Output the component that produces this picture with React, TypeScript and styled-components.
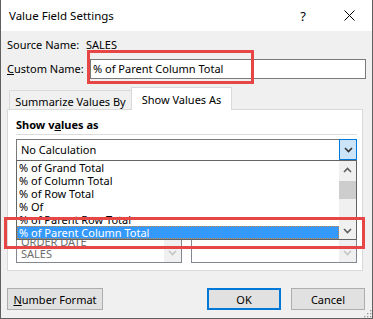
import styled, { createGlobalStyle } from "styled-components";

const GlobalStyle = createGlobalStyle`
  html, body {
    margin: 0;
    padding: 0;
    background: #fff;
  }
  body {
    font-family: "Noto Sans", "Segoe UI", sans-serif;
    font-size: 11px;
    color: #000;
    white-space: nowrap;
  }
`;

const Chevron = ({ dir, color }: { dir: "up" | "down"; color: string }) => (
  <svg width="9" height="6" viewBox="0 0 9 6">
    <path
      d={dir === "down" ? "M1 1 L4.5 4.5 L8 1" : "M1 5 L4.5 1.5 L8 5"}
      fill="none"
      stroke={color}
      strokeWidth="1.6"
    />
  </svg>
);

const App = () => {
  const options = [
    "% of Grand Total",
    "% of Column Total",
    "% of Row Total",
    "% Of",
    "% of Parent Row Total",
    "% of Parent Column Total",
  ];

  return (
    <>
      <GlobalStyle />
      <Window>
        <TitleBar>
          <Title>Value Field Settings</Title>
          <CaptionButton>?</CaptionButton>
          <CaptionButton>
            <svg width="11" height="11" viewBox="0 0 11 11">
              <path d="M0.5 0.5 L10.5 10.5 M10.5 0.5 L0.5 10.5" stroke="#000" strokeWidth="1" />
            </svg>
          </CaptionButton>
        </TitleBar>

        <Body>
          <FieldRow $labelWidth={79} $top={7}>
            <span>Source Name:</span>
            <span>SALES</span>
          </FieldRow>
          <FieldRow $labelWidth={83} $top={7}>
            <span>
              <u>C</u>ustom Name:
            </span>
            <TextInput>% of Parent Column Total</TextInput>
          </FieldRow>

          <TabStrip>
            <Tab>Summarize Values By</Tab>
            <Tab $active>Show Values As</Tab>
          </TabStrip>

          <TabPanel>
            <GroupHeading>
              Show v<u>a</u>lues as
            </GroupHeading>
            <Separator />
            <ComboWrap>
              <Combo>
                <ComboText>No Calculation</ComboText>
                <DropButton>
                  <Chevron dir="down" color="#333" />
                </DropButton>
              </Combo>
              <DropList>
                <ListRows>
                  {options.map((o, i) => (
                    <ListRow key={o} $selected={i === options.length - 1}>
                      {o}
                    </ListRow>
                  ))}
                </ListRows>
                <ScrollBar>
                  <ScrollArrow>
                    <Chevron dir="up" color="#606060" />
                  </ScrollArrow>
                  <Thumb />
                  <ScrollArrow $bottom>
                    <Chevron dir="down" color="#606060" />
                  </ScrollArrow>
                </ScrollBar>
              </DropList>
            </ComboWrap>

            {/* base field / base item lists, mostly covered by the open dropdown */}
            <BaseBoxes>
              <ListBox>
                <BoxItems>
                  <BoxItem>ORDER DATE</BoxItem>
                  <BoxItem>SALES</BoxItem>
                </BoxItems>
                <BoxScroll>
                  <Chevron dir="down" color="#c4c4c4" />
                </BoxScroll>
              </ListBox>
              <ListBox>
                <BoxItems />
                <BoxScroll>
                  <Chevron dir="down" color="#c4c4c4" />
                </BoxScroll>
              </ListBox>
            </BaseBoxes>
          </TabPanel>

          <ButtonRow>
            <DialogButton $width={96}>
              <u>N</u>umber Format
            </DialogButton>
            <Spacer />
            <DialogButton $width={74} $default>
              OK
            </DialogButton>
            <DialogButton $width={74}>Cancel</DialogButton>
          </ButtonRow>
        </Body>

        <Callout style={{ left: 86, top: 50, width: 167, height: 34 }} />
        <Callout style={{ left: 3, top: 217, width: 361, height: 32 }} />

        <SizeGrip width="9" height="9" viewBox="0 0 9 9">
          <g fill="#9a9a9a">
            <rect x="7" y="1" width="1.3" height="1.3" />
            <rect x="4" y="4" width="1.3" height="1.3" />
            <rect x="7" y="4" width="1.3" height="1.3" />
            <rect x="1" y="7" width="1.3" height="1.3" />
            <rect x="4" y="7" width="1.3" height="1.3" />
            <rect x="7" y="7" width="1.3" height="1.3" />
          </g>
        </SizeGrip>
      </Window>
    </>
  );
};

const Window = styled.div`
  position: relative;
  width: 373px;
  height: 319px;
  box-sizing: border-box;
  border: 1px solid #5f5f5f;
  border-top: none;
  background: #f0f0f0;
  display: flex;
  flex-direction: column;
  overflow: hidden;
`;

const TitleBar = styled.div`
  height: 31px;
  flex-shrink: 0;
  background: #fff;
  display: flex;
  align-items: center;
  padding-left: 8px;
`;

const Title = styled.div`
  flex: 1;
  font-size: 11.5px;
  margin-top: -1px;
`;

const CaptionButton = styled.div`
  width: 46px;
  height: 31px;
  display: flex;
  align-items: center;
  justify-content: center;
  font-size: 13px;
`;

const Body = styled.div`
  flex: 1;
  display: flex;
  flex-direction: column;
  padding: 0 6px;
`;

const FieldRow = styled.div<{ $labelWidth: number; $top: number }>`
  display: flex;
  align-items: center;
  margin-top: ${(p) => p.$top}px;
  line-height: 14px;

  & > span:first-child {
    width: ${(p) => p.$labelWidth}px;
    flex-shrink: 0;
  }
`;

const TextInput = styled.div`
  flex: 1;
  height: 20px;
  box-sizing: border-box;
  border: 1px solid #7a7a7a;
  background: #fff;
  padding: 0 2px;
  display: flex;
  align-items: center;
`;

const TabStrip = styled.div`
  display: flex;
  align-items: flex-end;
  height: 22px;
  margin-top: 8px;
  padding-left: 2px;
  position: relative;
  z-index: 1;
`;

const Tab = styled.div<{ $active?: boolean }>`
  box-sizing: border-box;
  height: ${(p) => (p.$active ? 23 : 19)}px;
  margin-bottom: ${(p) => (p.$active ? -1 : 0)}px;
  border: 1px solid #d9d9d9;
  border-bottom: none;
  background: ${(p) => (p.$active ? "#fff" : "#f0f0f0")};
  display: flex;
  align-items: center;
  justify-content: center;
  padding-top: ${(p) => (p.$active ? 0 : 2)}px;
  width: ${(p) => (p.$active ? 101 : 122)}px;
  ${(p) => (p.$active ? "" : "border-right: none;")}
`;

const TabPanel = styled.div`
  width: 356px;
  height: 162px;
  box-sizing: border-box;
  border: 1px solid #d9d9d9;
  background: #fff;
  padding: 8px 5px 0 8px;
  display: flex;
  flex-direction: column;
`;

const GroupHeading = styled.div`
  font-weight: 700;
  line-height: 14px;
`;

const Separator = styled.div`
  height: 1px;
  background: #dcdcdc;
  margin-top: 2px;
`;

const ComboWrap = styled.div`
  position: relative;
  margin-top: 4px;
  z-index: 2;
`;

const Combo = styled.div`
  height: 22px;
  box-sizing: border-box;
  border: 1px solid #7a7a7a;
  display: flex;
  align-items: flex-start;
  background: #fff;
`;

const ComboText = styled.div`
  flex: 1;
  height: 20px;
  line-height: 20px;
  padding-left: 4px;
`;

const DropButton = styled.div`
  width: 18px;
  height: 21px;
  box-sizing: border-box;
  margin: -1px -1px 0 0;
  background: #cce4f7;
  border: 1px solid #0078d7;
  display: flex;
  align-items: center;
  justify-content: center;
`;

const DropList = styled.div`
  position: absolute;
  left: 0;
  right: 0;
  top: 21px;
  height: 80px;
  box-sizing: border-box;
  border: 1px solid #646464;
  background: #fff;
  display: flex;
`;

const ListRows = styled.div`
  flex: 1;
  display: flex;
  flex-direction: column;
  overflow: hidden;
`;

const ListRow = styled.div<{ $selected?: boolean }>`
  height: 13px;
  flex-shrink: 0;
  line-height: 13px;
  padding-left: 2px;
  background: ${(p) => (p.$selected ? "#3399ff" : "transparent")};
  color: ${(p) => (p.$selected ? "#fff" : "#000")};
  ${(p) => (p.$selected ? "outline: 1px dotted #c9874a; outline-offset: -1px;" : "")}
`;

const ScrollBar = styled.div`
  width: 17px;
  background: #f0f0f0;
  display: flex;
  flex-direction: column;
`;

const ScrollArrow = styled.div<{ $bottom?: boolean }>`
  height: 17px;
  display: flex;
  align-items: center;
  justify-content: center;
  margin-top: ${(p) => (p.$bottom ? "auto" : "0")};
`;

const Thumb = styled.div`
  height: 18px;
  margin: 3px 0 0;
  background: #cdcdcd;
`;

const BaseBoxes = styled.div`
  display: grid;
  grid-template-columns: 166px 166px;
  column-gap: 9px;
  margin-top: 25px;
`;

const ListBox = styled.div`
  height: 77px;
  box-sizing: border-box;
  border: 1px solid #828790;
  display: flex;
  background: #fff;
`;

const BoxItems = styled.div`
  flex: 1;
  display: flex;
  flex-direction: column;
  justify-content: flex-end;
  padding: 0 0 2px 4px;
  overflow: hidden;
`;

const BoxItem = styled.div`
  line-height: 12px;
  color: #6d6d6d;
`;

const BoxScroll = styled.div`
  width: 17px;
  background: #f0f0f0;
  display: flex;
  align-items: flex-end;
  justify-content: center;
  padding-bottom: 6px;
  box-sizing: border-box;
`;

const ButtonRow = styled.div`
  display: flex;
  gap: 10px;
  margin-top: 17px;
  padding-right: 1px;
`;

const Spacer = styled.div`
  flex: 1;
`;

const DialogButton = styled.div<{ $width: number; $default?: boolean }>`
  width: ${(p) => p.$width}px;
  height: 22px;
  box-sizing: border-box;
  background: #e1e1e1;
  border: ${(p) => (p.$default ? "2px solid #0078d7" : "1px solid #adadad")};
  display: flex;
  align-items: center;
  justify-content: center;
`;

const Callout = styled.div`
  position: absolute;
  box-sizing: border-box;
  border: 3px solid #e64646;
  z-index: 5;
  pointer-events: none;
`;

const SizeGrip = styled.svg`
  position: absolute;
  right: 0;
  bottom: 0;
`;

export default App;
